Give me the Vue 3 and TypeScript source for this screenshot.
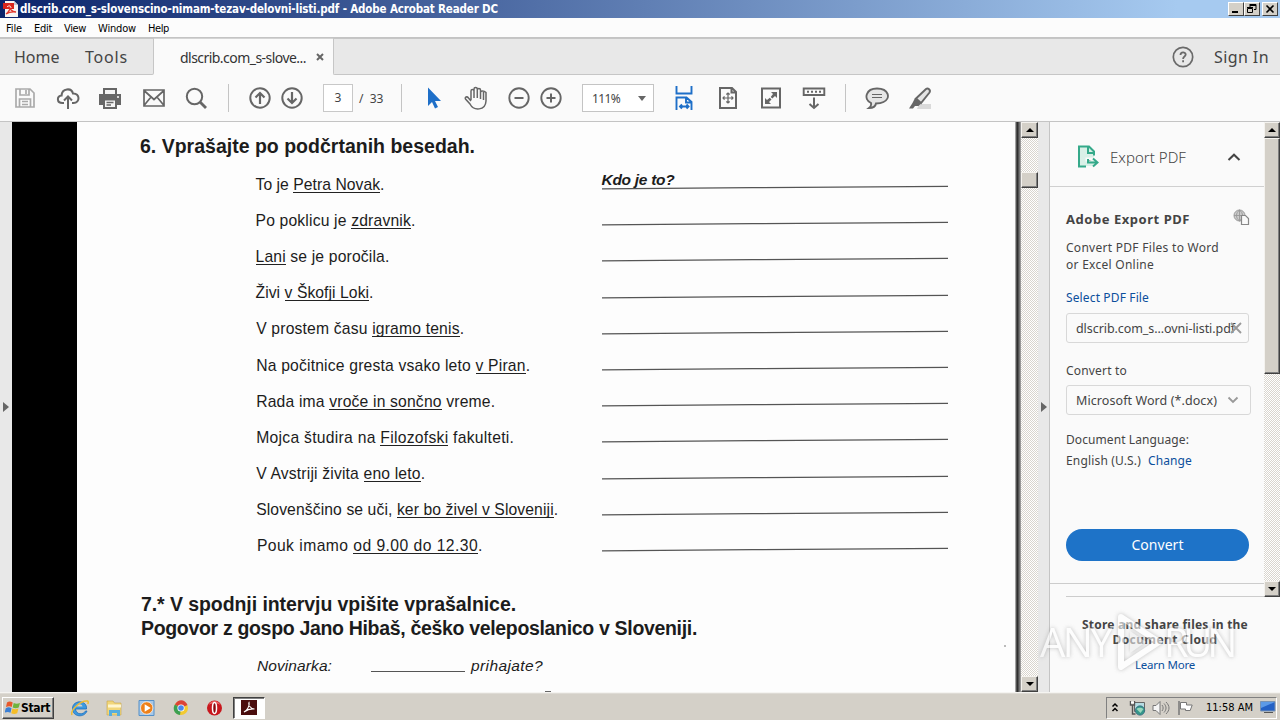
<script setup lang="ts">
interface Part { text: string; mark?: boolean }
interface Exercise { parts: Part[]; width: number; indent: number; answer?: string }

const p = (text: string): Part => ({ text })
const u = (text: string): Part => ({ text, mark: true })

const exercises: Exercise[] = [
  { parts: [p('To je '), u('Petra Novak'), p('.')], width: 129, indent: 0, answer: 'Kdo je to?' },
  { parts: [p('Po poklicu je '), u('zdravnik'), p('.')], width: 160, indent: 0 },
  { parts: [u('Lani'), p(' se je poročila.')], width: 134, indent: 0 },
  { parts: [p('Živi '), u('v Škofji Loki'), p('.')], width: 118, indent: 0 },
  { parts: [p('V prostem času '), u('igramo tenis'), p('.')], width: 208, indent: 1 },
  { parts: [p('Na počitnice gresta vsako leto '), u('v Piran'), p('.')], width: 274, indent: 1 },
  { parts: [p('Rada ima '), u('vroče in sončno'), p(' vreme.')], width: 239, indent: 1 },
  { parts: [p('Mojca študira na '), u('Filozofski'), p(' fakulteti.')], width: 258, indent: 1 },
  { parts: [p('V Avstriji živita '), u('eno leto'), p('.')], width: 169, indent: 1 },
  { parts: [p('Slovenščino se uči, '), u('ker bo živel v Sloveniji'), p('.')], width: 302, indent: 1 },
  { parts: [p('Pouk imamo '), u('od 9.00 do 12.30'), p('.')], width: 226, indent: 2 },
]

const menus = [
  { label: 'File', width: 16, gap: 12 },
  { label: 'Edit', width: 18, gap: 12 },
  { label: 'View', width: 22, gap: 12 },
  { label: 'Window', width: 38, gap: 12 },
  { label: 'Help', width: 21, gap: 0 },
]

// Tracks a line of text so that it spans the given number of pixels.
const vFit = {
  mounted(el: HTMLElement, binding: { value: number }) {
    const count = (el.textContent ?? '').length
    const natural = el.getBoundingClientRect().width
    if (count > 0) el.style.letterSpacing = `${(binding.value - natural) / count}px`
  },
}
</script>

<template>
  <div class="screen">
    <header class="title">
      <svg class="app-icon" width="16" height="16" viewBox="0 0 16 16">
        <path d="M2 0h9l4 4v12H2z" fill="#f6f4f4" />
        <path d="M11 0l4 4h-4z" fill="#c9c9d2" />
        <path d="M0 2h11v6H0z" fill="#d8251c" />
        <path d="M3 13c3-2 5-6 4-9-1 4 2 7 6 7-4-.5-7 0-10 2z" fill="none" stroke="#e2382c" stroke-width="1.3" />
        <path d="M4 6c2-2 4-1 4 1" fill="none" stroke="#fff" />
      </svg>
      <span v-fit="478" class="title-text">dlscrib.com_s-slovenscino-nimam-tezav-delovni-listi.pdf - Adobe Acrobat Reader DC</span>
      <div class="winbtns">
        <i class="wb"><svg width="14" height="12" viewBox="0 0 14 12"><path d="M3 9h6" stroke="#000" stroke-width="2" /></svg></i>
        <i class="wb"><svg width="14" height="12" viewBox="0 0 14 12"><path d="M5 2.500h6M5 1.500h6v5H9M5 1v3M2.500 5.500h5v4h-5zM2 4.500h6" fill="none" stroke="#000" /></svg></i>
        <i class="wb last"><svg width="14" height="12" viewBox="0 0 14 12"><path d="M3.500 2.500l7 7M10.500 2.500l-7 7" stroke="#000" stroke-width="1.600" /></svg></i>
      </div>
    </header>

    <nav class="menu">
      <span v-for="m in menus" :key="m.label" class="menu-item" :style="{ width: m.width + m.gap + 'px' }"><span v-fit="m.width">{{ m.label }}</span></span>
    </nav>

    <div class="tabs">
      <div class="tab-left">
        <span v-fit="46" class="home">Home</span><span v-fit="43">Tools</span>
      </div>
      <div class="tab-active">
        <span v-fit="126">dlscrib.com_s-slove...</span>
        <svg width="8" height="8" viewBox="0 0 8 8"><path d="M1 1l6 6M7 1l-6 6" stroke="#666" stroke-width="2" /></svg>
      </div>
      <div class="tab-right">
        <svg width="22" height="22" viewBox="0 0 22 22"><circle cx="11" cy="11" r="9.700" fill="none" stroke="#6a6a6a" stroke-width="1.700" /><path d="M8.500 9c0-3.500 5.200-3.300 5.200-.4 0 2-2.600 1.900-2.600 4.300M11.100 14.200v2" fill="none" stroke="#6a6a6a" stroke-width="1.800" /></svg>
        <span v-fit="55" class="signin">Sign In</span>
      </div>
    </div>

    <div class="toolbar">
      <svg class="ic pale" viewBox="0 0 24 24"><path d="M3 3h14l4 4v14H3zM7 3v6h9V3M13 4v4M6.500 21v-8h11v8M9 15.500h6M9 18.500h6" /></svg>
      <svg class="ic g19" viewBox="0 0 24 24"><path d="M8 17H6.500C.5 17 .5 9.700 5.600 9.500 6 2 15.500 1.500 17 7.500c7-.5 7.500 9.500.5 9.500H16M12 23V11M8 14.500l4-4 4 4" stroke-width="2" /></svg>
      <svg class="ic g18" viewBox="0 0 24 24"><path d="M1 8h22v11h-4v-4H5v4H1z" fill="#666" stroke="none" /><path d="M6 8V3h12v5" stroke-width="2" fill="#f4f4f4" /><path d="M6 13.500h12V22H6z" stroke-width="2" fill="#f4f4f4" /><path d="M8.500 16.500h7M8.500 19h4.500" stroke-width="1.300" /><path d="M19 11h2" stroke="#fff" /></svg>
      <svg class="ic g20" viewBox="0 0 24 24"><path d="M2 4h20v16H2zM2 4.500l10 9 10-9M2 19.500l7-8.500M22 19.500L15 11" /></svg>
      <svg class="ic g18" viewBox="0 0 24 24"><circle cx="10.500" cy="10.500" r="7.700" stroke-width="2" /><path d="M16 16l6 6" stroke-width="2.800" /></svg>
      <i class="sep g20" />
      <svg class="ic g19" viewBox="0 0 24 24"><circle cx="12" cy="12" r="9.700" stroke-width="2" /><path d="M12 18V7M7.500 11.500L12 7l4.500 4.500" stroke-width="2.200" /></svg>
      <svg class="ic g8" viewBox="0 0 24 24"><circle cx="12" cy="12" r="9.700" stroke-width="2" /><path d="M12 6v11M7.500 12.500L12 17l4.500-4.500" stroke-width="2.200" /></svg>
      <div class="pagebox g19">3</div>
      <span class="total">/&nbsp; 33</span>
      <i class="sep g18" />
      <svg class="ic g20" viewBox="0 0 24 24"><path d="M6 1.500v18.500l4-4 3 6.500 3-1.500-3-6h6z" fill="#1e6fc8" stroke="none" /></svg>
      <svg class="ic g18" viewBox="0 0 24 24"><path d="M7 14V5c0-2 3-2 3 0v7V3c0-2 3.300-2 3.300 0v9V4c0-2 3.200-2 3.200 0v9V6.500c0-2 3.500-2 5.500 0V15c-.5 10-12.500 10-16 3L1.500 13c-1-2 1.500-3 3-1L7 15M19.500 6v8" stroke-width="1.500" /></svg>
      <svg class="ic g19" viewBox="0 0 24 24"><circle cx="12" cy="12" r="9.700" stroke-width="1.900" /><path d="M7.500 12h9" stroke-width="2" /></svg>
      <svg class="ic g8" viewBox="0 0 24 24"><circle cx="12" cy="12" r="9.700" stroke-width="1.900" /><path d="M7.500 12h9M12 7.500v9" stroke-width="2" /></svg>
      <div class="zoombox g19"><span v-fit="28">111%</span><i class="caret" /></div>
      <svg class="ic blue g18" viewBox="0 0 24 24"><path d="M4.500 0v7.500h15V0M4.500 24V11.500h10l5 4.500v8M14 11.500V16.500h5M8 20.500h8M10 18.500l-2 2 2 2M14.500 18.500l2 2-2 2" /></svg>
      <svg class="ic g20" viewBox="0 0 24 24"><path d="M4 2h12l4 4v16H4zM15.500 2v4.500H20" stroke-width="2" /><path d="M12 7v10M7 12h10M10.300 8.500L12 7l1.700 1.500M10.300 15.500L12 17l1.700-1.500M8.500 10.300L7 12l1.500 1.700M15.500 10.300L17 12l-1.500 1.700" stroke-width="1.200" /></svg>
      <svg class="ic g19" viewBox="0 0 24 24"><path d="M3 2.500h18v19H3z" stroke-width="2" /><path d="M12 6h6v6l-2-2-2.700 2.500-1.600-1.600L14 8zM6 12v6h6l-2-2 2.500-2.500-1.700-1.700L8 14z" fill="#666" stroke="none" /></svg>
      <svg class="ic g19" viewBox="0 0 24 24"><path d="M1.700 2.500h20.600v6.500H1.700z" stroke-width="1.900" /><path d="M5 5.800h14" stroke-width="2" stroke-dasharray="2 2" /><path d="M12 11.500V22M7.500 18l4.500 4 4.500-4" stroke-width="2" /></svg>
      <i class="sep g19" />
      <svg class="ic g19" viewBox="0 0 24 24"><path d="M6 17C-2 13 1 2.500 12 2.500c12 0 14 10 6.500 13.500-2.500 1.300-4.500 1.500-7.500 1.500-.5 3-3.500 4.500-7 4.500 2-1.500 2.500-3 2-5z" fill="#e6e6e6" stroke-width="1.900" /><path d="M7 8.500h10M7 11.500h10" stroke-width="1.200" /></svg>
      <svg class="ic g19" viewBox="0 0 24 24"><path d="M11 18h12v5H9z" fill="#dadada" stroke="none" /><path d="M8 12.500L18 3c2-1.500 5 1 3.500 3.500L13 17z" fill="#e4e4e4" stroke-width="1.900" /><path d="M7 12l6 5.500-2.500 2.500H7l-2 2.500H1L4.500 17z" fill="#666" stroke="none" /></svg>
    </div>

    <main class="work">
      <div class="strip left"><i class="tri" /></div>
      <div class="scan-dark" />
      <section class="page">
        <h2 class="h6"><span v-fit="335">6. Vprašajte po podčrtanih besedah.</span></h2>
        <div class="list">
          <div v-for="(e, i) in exercises" :key="i" class="row">
            <div class="q" :style="{ paddingLeft: e.indent * 0.7 + 'px' }">
              <span v-fit="e.width" class="sentence"><template v-for="(part, j) in e.parts" :key="j"><span v-if="part.mark" class="mark">{{ part.text }}</span><template v-else>{{ part.text }}</template></template></span>
            </div>
            <div class="a">
              <span v-if="e.answer" v-fit="73" class="answer">{{ e.answer }}</span>
              <svg class="rule" width="347" height="5" viewBox="0 0 347 5"><path d="M0 3.800L150 2.700 346 1.300" fill="none" stroke="#555" stroke-width="1.300" /></svg>
            </div>
          </div>
        </div>
        <h2 class="h7"><span v-fit="375">7.* V spodnji intervju vpišite vprašalnice.</span><br><span v-fit="556">Pogovor z gospo Jano Hibaš, češko veleposlanico v Sloveniji.</span></h2>
        <div class="dialog">
          <span class="who"><span v-fit="75">Novinarka:</span></span><i class="blank" /><span v-fit="72">prihajate?</span>
        </div>
        <i class="speck" /><i class="speck caron" />
      </section>
      <div class="scan-edge" />
      <div class="scroll">
        <i class="sb"><i class="up" /></i>
        <i class="thumb small" />
        <i class="sb end"><i class="down" /></i>
      </div>
      <div class="strip right"><i class="tri" /></div>
      <aside class="panel">
        <div class="panel-top">
          <div class="panel-body">
            <div class="export">
              <svg width="22" height="24" viewBox="0 0 22 24"><path d="M2 2h10l5 5v14H2z" fill="#d9f0e7" /><path d="M9 21.500H2v-20h10l5 5v4M11 2v6h6" fill="none" stroke="#35a98a" stroke-width="2" /><path d="M10 16.500V14h7" stroke="#fafafa" stroke-width="3" /><path d="M11 14v3.500h9M16 13.500l4.500 4-4.500 4" fill="none" stroke="#35a98a" stroke-width="2" /></svg>
              <span v-fit="76">Export PDF</span>
              <svg class="chev" width="14" height="8" viewBox="0 0 14 8"><path d="M1.500 7L7 1.700 12.500 7" fill="none" stroke="#444" stroke-width="2" /></svg>
            </div>
            <div class="form">
              <div class="name"><b v-fit="124">Adobe Export PDF</b>
                <svg width="17" height="17" viewBox="0 0 17 17"><circle cx="6.500" cy="6.500" r="5.500" fill="#ccc" stroke="#999" /><path d="M1 6.500h11M6.500 1v11M6.500 1c-4 3-4 8 0 11M6.500 1c4 3 4 8 0 11" fill="none" stroke="#999" stroke-width=".9" /><path d="M8.500 6.500h4l3 3v6h-7z" fill="#fafafa" stroke="#888" stroke-width="1.200" /></svg>
              </div>
              <p class="desc"><span v-fit="153">Convert PDF Files to Word</span><br><span v-fit="88">or Excel Online</span></p>
              <div class="line link select"><span v-fit="83">Select PDF File</span></div>
              <div class="field"><span v-fit="159">dlscrib.com_s...ovni-listi.pdf</span><svg class="clear" width="12" height="12" viewBox="0 0 12 12"><path d="M1 1l10 10M11 1L1 11" stroke="#999" stroke-width="1.900" /></svg></div>
              <div class="line to"><span v-fit="61">Convert to</span></div>
              <div class="field drop"><span v-fit="141">Microsoft Word (*.docx)</span><svg width="12" height="8" viewBox="0 0 12 8"><path d="M1.500 1.500L6 6l4.500-4.500" fill="none" stroke="#999" stroke-width="1.800" /></svg></div>
              <div class="line lang"><span v-fit="123">Document Language:</span></div>
              <div class="line eng"><span class="us"><span v-fit="75">English (U.S.)</span></span><span v-fit="44" class="link">Change</span></div>
              <button class="convert"><span v-fit="52">Convert</span></button>
            </div>
            <i class="divider one" /><i class="divider two" />
          </div>
          <div class="scroll side">
            <i class="sb"><i class="up" /></i>
            <i class="thumb long" />
            <i class="sb end"><i class="down" /></i>
          </div>
        </div>
        <div class="store">
          <b v-fit="166">Store and share files in the</b>
          <b v-fit="105">Document Cloud</b>
          <span v-fit="60" class="link">Learn More</span>
        </div>
      </aside>
    </main>

    <footer class="taskbar">
      <div class="start">
        <svg width="16" height="16" viewBox="0 0 16 16"><path d="M2 2.500C4 1 6 1.500 7.700 2.500L6.700 7C5 6 3.500 6 1 7z" fill="#e8582a" /><path d="M8.700 3c2 1 4 1 6.300 0l-1.300 4.500c-2 1-4 1-6 0z" fill="#6fb43c" /><path d="M.8 8.200c2-1.200 4-1 5.700 0l-1 4.500c-2-1-3.700-1-6 0z" fill="#3b7fd4" /><path d="M7.400 8.600c2 1 4 1 6 0l-1.200 4.600c-2 1-4 1-6 0z" fill="#f5bd27" /></svg>
        <b v-fit="29">Start</b>
      </div>
      <svg class="tk ie" viewBox="0 0 18 18"><path d="M14.500 12c-2 4-9.500 4-10-2h11c1-9.500-14-9.500-14-.5 0 9 12 9.500 14.500 2.500z" fill="#3c9ae0" stroke="#1d6cbc" stroke-width=".8" /><path d="M5.500 7.500c.5-3 5.500-3 6 0z" fill="#d4d0c8" /><path d="M1 16c-2-5 9-15 15.500-14 1 .5.700 2 .3 3" fill="none" stroke="#edbc36" stroke-width="1.500" /></svg>
      <svg class="tk" viewBox="0 0 18 18"><path d="M2 2h6l1.500 2H16v12H2z" fill="#f1d679" stroke="#c7a44b" stroke-width=".6" /><path d="M3 5.500h13v3H3z" fill="#fff6cf" /><path d="M4 17v-6h11v6h-3v-3H7v3z" fill="#57aede" /></svg>
      <svg class="tk" viewBox="0 0 18 18"><path d="M1 1.500h15v15H1z" fill="#a7c8e8" stroke="#5590c8" /><circle cx="8.700" cy="9" r="6.200" fill="#ee8019" stroke="#fff" stroke-width=".7" /><path d="M6.700 5.200l6 3.800-6 3.800z" fill="#fff" /></svg>
      <svg class="tk" viewBox="0 0 18 18"><circle cx="9" cy="9" r="7" fill="#f3ca31" /><path d="M9 9L2.900 5.500C6-.5 13-.3 15.500 6z" fill="#dc4437" /><path d="M9 9l-1 7C1.500 15 .5 9 2.900 5.500z" fill="#3ca052" /><circle cx="9" cy="9" r="3.600" fill="#fff" /><circle cx="9" cy="9" r="2.800" fill="#4b87ec" /></svg>
      <svg class="tk" viewBox="0 0 18 18"><circle cx="8.500" cy="9" r="7.500" fill="#c8171d" /><path d="M2.500 6C5 .5 12 .5 14.500 6 11 3.500 6 3.500 2.500 6z" fill="#ea6261" /><ellipse cx="8.500" cy="9" rx="2" ry="5.500" fill="#8b090d" stroke="#fff" stroke-width="1.500" /></svg>
      <div class="running"><svg width="16" height="15" viewBox="0 0 16 15"><path d="M0 0h16v15H0z" fill="#4a0d0d" /><path d="M3 12c3-1.500 6-6 5-9.500-1.200 2 1.500 6.500 5.500 6.500-4-.5-7 .5-10.500 3z" fill="none" stroke="#fff" stroke-width="1.100" /></svg></div>
      <div class="tray">
        <svg class="up2" width="8" height="12" viewBox="0 0 8 12"><path d="M1.500 4.500L4 2l2.500 2.500M1.500 9L4 6.500 6.500 9" fill="none" stroke="#000" stroke-width="1.500" /></svg>
        <svg class="net" width="17" height="16" viewBox="0 0 17 16"><path d="M5.500 2.500h10v9h-10z" fill="#b6dce2" stroke="#666" /><circle cx="11" cy="10.500" r="4.700" fill="#35968a" stroke="#3b6681" stroke-width=".7" /><path d="M7.500 9c3-2 5-1 7 0l-3 4z" fill="#9bd7bd" /><path d="M1.500 1v4h4V1M3.500 5v9h3" fill="none" stroke="#555" stroke-width="1.400" /><path d="M2 2.500h3" stroke="#fff" stroke-width="2" /></svg>
        <svg class="snd" width="18" height="16" viewBox="0 0 18 16"><path d="M1 5.500h3l4-4v13l-4-4H1z" fill="#f5f5f5" stroke="#777" /><path d="M10 5c1.500 2 1.500 4 0 6M12 3.500c2.700 3 2.700 6 0 9M14 2c4 4 4 8 0 12" fill="none" stroke="#777" /></svg>
        <svg class="flag" width="17" height="16" viewBox="0 0 17 16"><path d="M2 1v14" stroke="#777" stroke-width="1.500" /><path d="M3.500 2.500h6v2.500h5.700l-2 5.500H8.500V9h-5z" fill="#fff" stroke="#777" /></svg>
        <span v-fit="47" class="clock">11:58 AM</span>
        <svg class="mon" width="16" height="13" viewBox="0 0 16 13"><path d="M.5.5h14.500v9.500H.5z" fill="#2461c5" stroke="#7893b3" /><path d="M1 1h14L1 7z" fill="#5c9ae7" /><path d="M4 11.500h9" stroke="#555" /></svg>
      </div>
    </footer>

    <div class="watermark">
      <span class="wm-any"><span v-fit="70">ANY</span></span>
      <svg width="54" height="64" viewBox="0 0 54 64"><path d="M11 7l38 25-38 25z" fill="none" stroke="#fff" stroke-width="6" stroke-linejoin="round" /><path d="M20 21l16 11-16 11z" fill="#eee" /></svg>
      <span class="wm-run"><span v-fit="68">RUN</span></span>
    </div>
  </div>
</template>

<style>
html, body { margin: 0; overflow: hidden; background: #fafafa; }
</style>

<style scoped>
* { box-sizing: border-box; }
.screen { position: relative; width: 1280px; height: 720px; overflow: hidden; display: flex; flex-direction: column; background: #fafafa; font-family: 'Noto Sans', 'Open Sans', sans-serif; font-size: 12px; color: #444; white-space: nowrap; }
svg { display: block; flex: none; }
b { display: inline-block; }
.title { height: 18px; flex: none; display: flex; align-items: center; padding: 0 2px 0 3px; background: linear-gradient(90deg, #0b246b 0%, #a6caf0 92%); }
.title-text { margin-left: 1px; font: bold 11.500px/16px 'DejaVu Sans Condensed', 'DejaVu Sans', sans-serif; font-stretch: condensed; color: #fff; }
.winbtns { margin-left: auto; display: flex; }
.wb { display: block; width: 16px; height: 14px; background: #d4d0c8; border: 1px solid; border-color: #fff #404040 #404040 #fff; }
.wb.last { margin-left: 2px; }
.menu { height: 20px; flex: none; padding: 2px 0 0 6px; display: flex; align-items: center; border-bottom: 1px solid #c4c4c4; font: 11px/16px 'DejaVu Sans Condensed', 'DejaVu Sans', sans-serif; font-stretch: condensed; color: #000; background: #fcfcfc; }
.tabs { height: 37px; flex: none; display: flex; background: #fafafa; }
.tab-left { width: 154px; display: flex; align-items: center; padding-left: 14px; background: #e8e8e8; border: solid #c6c6c6; border-width: 1px 1px 1px 0; border-radius: 0 0 2px 0; font-size: 16px; }
.home { margin-right: 25px; }
.tab-left span:first-child { width: 46px; }
.tab-active { width: 179px; display: flex; align-items: center; padding-left: 26px; font-size: 14px; color: #333; border-top: 1px solid #d4d4d4; }
.tab-active svg { margin-left: 10px; }
.tab-right { flex: 1; display: flex; align-items: center; justify-content: flex-end; padding-right: 11px; background: #e8e8e8; border: 1px solid #c6c6c6; border-right: 0; font-size: 16px; border-radius: 0 0 0 2px; }
.signin { margin-left: 20px; }
.toolbar { height: 47px; flex: none; display: flex; align-items: center; padding-left: 13px; border-bottom: 1px solid #c4c4c4; }
.ic { width: 24px; height: 24px; fill: none; stroke: #666; stroke-width: 1.700; }
.pale { stroke: #aaa; }
.blue { stroke: #1e6fc8; stroke-width: 1.900; }
.g8 { margin-left: 8px; }
.g18 { margin-left: 18px; }
.g19 { margin-left: 19px; }
.g20 { margin-left: 20px; }
.sep { width: 1px; height: 28px; background: #c4c4c4; flex: none; }
.pagebox { width: 30px; height: 28px; flex: none; border: 1px solid #c8c8c8; background: #fff; text-align: center; line-height: 26px; }
.total { width: 24px; margin-left: 6px; }
.zoombox { width: 72px; height: 28px; flex: none; display: flex; align-items: center; justify-content: space-between; padding: 0 7px 0 9px; border: 1px solid #c4c4c4; background: #fff; }
.caret { border: 4px solid transparent; border-top: 5px solid #666; border-bottom: 0; }
.work { height: 570px; flex: none; display: flex; }
.strip { width: 12px; flex: none; background: #e8e8e8; display: flex; align-items: center; }
.strip.left { padding-left: 3px; }
.strip.right { border-right: 1px solid #c4c4c4; padding-left: 3px; }
.tri { border: 5px solid transparent; border-left: 6px solid #666; border-right: 0; }
.scan-dark { width: 65px; flex: none; background: #000; }
.page { width: 938px; flex: none; position: relative; background: #fdfdfd; color: #1c1c1c; overflow: hidden; font-family: 'Liberation Sans', Arial, sans-serif; }
h2 { margin: 0; font-size: 19.500px; line-height: 24px; font-weight: bold; }
.h6 { padding: 12px 0 0 63px; height: 44px; }
.row { height: 36.2px; display: flex; align-items: center; padding-left: 178.500px; }
.q { width: 346px; padding-top: 1px; font-size: 15.700px; line-height: 18px; }
.mark { border-bottom: 1px solid #222; display: inline-block; height: 17px; }
.a { position: relative; width: 347px; height: 36px; }
.answer { font-size: 15.500px; line-height: 18px; font-weight: bold; font-style: italic; display: inline-block; margin-top: 5px; }
.rule { position: absolute; left: 0; top: 19px; }
.h7 { padding: 28px 0 0 64px; }
.dialog { margin-top: 17px; padding-left: 180px; display: flex; align-items: center; font-size: 15.500px; line-height: 18px; font-style: italic; }
.who { width: 114px; }
.blank { width: 94px; height: 1px; margin: 11px 6px 0 0; background: #555; }
.speck { position: absolute; left: 927px; top: 523px; width: 2px; height: 2px; background: #bbb; }
.caron { left: 468px; top: 569px; width: 6px; height: 1px; background: #666; }
.scan-edge { width: 6px; flex: none; background: linear-gradient(90deg, #ccc, #222 35%, #555 60%, #aaa); }
.scroll { width: 17px; flex: none; display: flex; flex-direction: column; background: repeating-conic-gradient(#d9d5ce 0 25%, #fff 0 50%) 0 0 / 2px 2px; }
.scroll.side { width: 16px; }
.sb, .thumb { display: flex; align-items: center; justify-content: center; height: 16px; flex: none; background: #d4d0c8; border: 1px solid; border-color: #f4f2ee #404040 #404040 #f4f2ee; box-shadow: inset -1px -1px #808080; }
.sb.end { margin-top: auto; }
.up, .down { border: 4px solid transparent; border-bottom: 4px solid #000; border-top: 0; }
.down { border-top: 4px solid #000; border-bottom: 0; }
.small { margin-top: 34px; }
.long { height: 236px; }
.panel { width: 230px; flex: none; }
.panel-top { display: flex; height: 475px; }
.panel-body { width: 214px; }
.export { height: 65px; padding: 5px 0 0 27px; display: flex; align-items: center; border-bottom: 1px solid #d0d0d0; font-size: 15px; font-weight: 300; }
.export span { margin-left: 11px; }
.chev { margin-left: 41px; }
.form { padding-left: 16px; width: 202px; }
.name { height: 20px; margin-top: 22px; display: flex; align-items: center; font-size: 13px; }
.name svg { margin-left: 43px; margin-top: -4px; }
.desc { margin: 10px 0 0; line-height: 17px; }
.line { height: 18px; line-height: 20px; }
.link { color: #0b4f9c; }
.select { margin-top: 15px; }
.field { height: 30px; width: 183px; margin-top: 7px; padding-left: 9px; border: 1px solid #d8d8d8; border-radius: 3px; display: flex; align-items: center; font-size: 12.500px; }
.field span { padding-top: 1px; }
.clear { margin-left: -5px; }
.to { margin-top: 18px; }
.drop { width: 185px; margin-top: 6px; justify-content: space-between; padding-right: 11px; }
.lang { margin-top: 15px; }
.eng { display: flex; margin-top: 3px; }
.us { width: 82px; }
.convert { display: block; width: 183px; height: 32px; margin-top: 60px; padding: 0; border: 0; border-radius: 16px; background: #1e73c8; color: #fff; font: 14px/30px 'Noto Sans', sans-serif; }
.divider { display: block; height: 1px; background: #ccc; }
.one { margin-top: 22px; }
.two { margin: 12px 0 0 16px; }
.store { display: flex; flex-direction: column; align-items: center; padding-top: 20px; font-size: 12px; line-height: 15px; }
.store .link { margin-top: 10px; font-size: 11.500px; }
.taskbar { height: 28px; flex: none; display: flex; align-items: center; padding: 2px 3px 0 2px; background: #d4d0c8; border-top: 1px solid #f5f4f1; box-shadow: inset 0 1px #dedbd5; }
.start { width: 52px; height: 22px; display: flex; align-items: center; padding-left: 2px; border: 1px solid; border-color: #fff #404040 #404040 #fff; box-shadow: inset -1px -1px #808080; font: 12px/16px 'DejaVu Sans Condensed', sans-serif; color: #000; }
.tk { width: 18px; height: 18px; margin-left: 15.700px; }
.ie { margin-left: 17px; }
.running { width: 32px; height: 22px; margin-left: 9px; display: flex; align-items: center; justify-content: center; background: #fff; border: 1px solid; border-color: #404040 #fff #fff #404040; box-shadow: inset 1px 1px #808080; }
.tray { width: 171px; height: 22px; margin-left: auto; display: flex; align-items: center; border: 1px solid; border-color: #808080 #fff #fff #808080; padding-left: 4px; color: #000; }
.net { margin-left: 10px; }
.snd { margin-left: 6px; }
.flag { margin-left: 7px; }
.clock { margin-left: 12px; font: 11px/16px 'DejaVu Sans Condensed', sans-serif; }
.mon { margin-left: 7px; }
.watermark { position: absolute; left: 1040px; top: 609px; width: 200px; height: 66px; display: flex; align-items: center; pointer-events: none; opacity: .6; font: 40px/48px 'Open Sans', 'Noto Sans', sans-serif; font-weight: 500; color: #fff; filter: drop-shadow(0 0 2px #999); }
.wm-any { width: 70px; }
</style>
